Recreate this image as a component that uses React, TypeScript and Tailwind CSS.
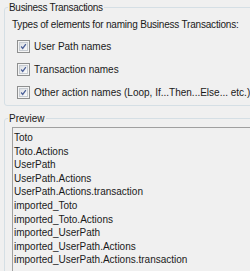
const previewItems = [
  'Toto',
  'Toto.Actions',
  'UserPath',
  'UserPath.Actions',
  'UserPath.Actions.transaction',
  'imported_Toto',
  'imported_Toto.Actions',
  'imported_UserPath',
  'imported_UserPath.Actions',
  'imported_UserPath.Actions.transaction',
]

const options = [
  'User Path names',
  'Transaction names',
  'Other action names (Loop, If...Then...Else... etc.)',
]

const CheckBox = () => (
  <div className="w-[13px] h-[13px] shrink-0 border border-[#8e8f8f] bg-[#f4f4f4] p-[1px]">
    <div className="w-full h-full border border-[#c6cbd1] bg-gradient-to-br from-[#dcdfe3] to-[#fbfbfb] flex items-center justify-center">
      <svg width="9" height="9" viewBox="0 0 9 9">
        <path d="M1.5 4.5 L3.5 7 L7.5 1.5" fill="none" stroke="#4a5f97" strokeWidth="1.6" />
      </svg>
    </div>
  </div>
)

export default function App() {
  return (
    <div className="w-[250px] h-[271px] overflow-hidden bg-[#f0f0f0] text-[10px] leading-[13px] text-[#1a1a1a] font-['Liberation_Sans',sans-serif] pl-[4px] pt-[1px]">
      <fieldset className="w-[270px] border border-[#d5dfe5] rounded-[3px] pb-[6px]">
        <legend className="ml-[3px] px-[1px] tracking-[-0.3px]">Business Transactions</legend>
        <div className="pl-[7px] pt-[4px]">
          <div className="tracking-[-0.2px]">Types of elements for naming Business Transactions:</div>
          <div className="flex flex-col gap-[10px] mt-[9px] pl-[5px]">
            {options.map((o) => (
              <div key={o} className="flex items-center gap-[4px]">
                <CheckBox />
                <span>{o}</span>
              </div>
            ))}
          </div>
        </div>
      </fieldset>
      <fieldset className="w-[270px] h-[200px] mt-[6px] border border-[#d5dfe5] rounded-[3px]">
        <legend className="ml-[3px] px-[1px]">Preview</legend>
        <div className="ml-[7px] mt-[2px] h-[160px] border-t border-l border-[#a0a0a0] pl-[1px] pt-[3px]">
          {previewItems.map((item) => (
            <div key={item} className="leading-[13.6px]">
              {item}
            </div>
          ))}
        </div>
      </fieldset>
    </div>
  )
}
